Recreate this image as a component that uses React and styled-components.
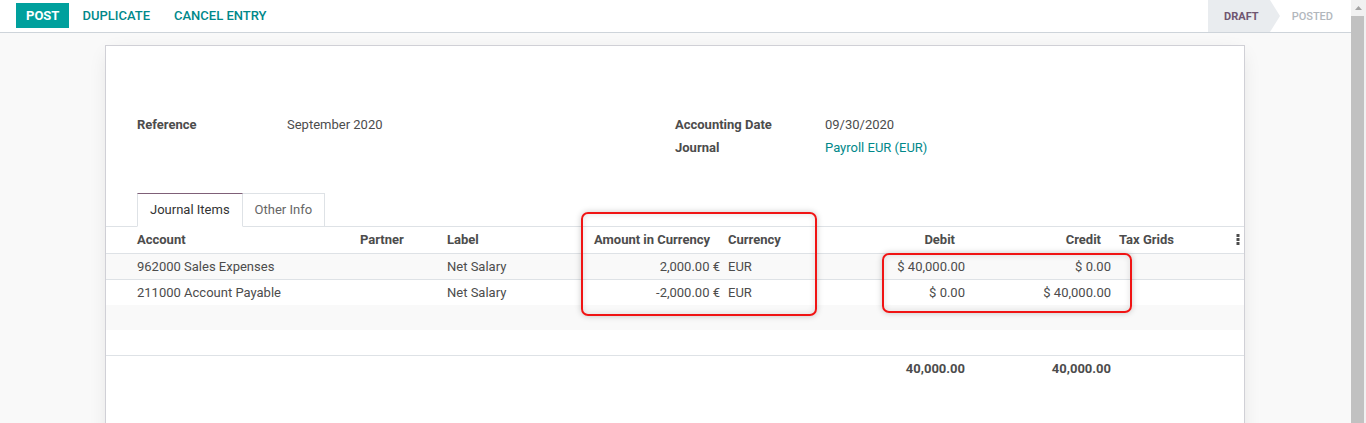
import React from 'react';
import styled, { createGlobalStyle } from 'styled-components';

const GlobalStyle = createGlobalStyle`
    html, body {
        margin: 0;
        padding: 0;
        height: 423px;
        overflow: hidden;
        background: #ffffff;
    }
    body {
        font-family: Roboto, "Noto Sans", "Liberation Sans", sans-serif;
        font-size: 13px;
        color: #4c4c4c;
    }
`;

const Page = styled.div`
    display: flex;
    height: 423px;
    overflow: hidden;
`;

const Main = styled.div`
    flex: 1;
    display: flex;
    flex-direction: column;
    min-width: 0;
`;

const ControlPanel = styled.div`
    display: flex;
    justify-content: space-between;
    height: 32px;
    padding-left: 16px;
    background: #ffffff;
    border-bottom: 1px solid #ced4da;
    flex-shrink: 0;
`;

const Buttons = styled.div`
    display: flex;
    align-items: flex-start;
    gap: 2px;
    padding-top: 3px;
`;

const ActionButton = styled.button`
    height: 25px;
    padding: 0 ${p => (p.$primary ? '10px' : '11px')};
    border: none;
    font-family: inherit;
    font-size: 13px;
    font-weight: ${p => (p.$primary ? 700 : 500)};
    text-transform: uppercase;
    background: ${p => (p.$primary ? '#00a09d' : 'transparent')};
    color: ${p => (p.$primary ? '#ffffff' : '#00888a')};
    cursor: pointer;
`;

const StatusBar = styled.div`
    display: flex;
    align-items: stretch;
    height: 32px;
    padding-right: 18px;
`;

const StatusStep = styled.div`
    position: relative;
    display: flex;
    align-items: center;
    font-size: 11px;
    font-weight: ${p => (p.$active ? 700 : 500)};
    color: ${p => (p.$active ? '#6f5670' : '#b2b7bd')};
    background: ${p => (p.$active ? '#e9ecef' : 'transparent')};
    padding: ${p => (p.$active ? '0 11px 0 16px' : '0 0 0 22px')};

    ${p => p.$active && `
        &::after {
            content: '';
            position: absolute;
            top: 0;
            right: -10px;
            border-top: 16px solid transparent;
            border-bottom: 16px solid transparent;
            border-left: 10px solid #e9ecef;
        }
    `}
`;

const Content = styled.div`
    flex: 1;
    background: #f9f9f9;
    padding: 12px 1px 0 0;
    overflow: hidden;
`;

const Sheet = styled.div`
    position: relative;
    width: 1140px;
    min-height: 420px;
    margin: 0 auto;
    box-sizing: border-box;
    background: #ffffff;
    border: 1px solid #d0d0d6;
    box-shadow: 0 5px 20px -5px rgba(0, 0, 0, 0.12);
`;

const FormBody = styled.div`
    padding: 67px 31px 0;
`;

const Groups = styled.div`
    display: grid;
    grid-template-columns: 1fr 1fr;
`;

const Group = styled.div`
    display: grid;
    grid-template-columns: 150px 1fr;
    grid-auto-rows: 23px;
    align-items: center;
`;

const FieldLabel = styled.div`
    font-weight: 700;
    color: #4c4c4c;
`;

const FieldValue = styled.div`
    color: ${p => (p.$link ? '#00888a' : '#4c4c4c')};
`;

const Tabs = styled.div`
    display: flex;
    margin-top: 34px;
    padding-left: 31px;
    border-bottom: 1px solid #dee2e6;
`;

const Tab = styled.div`
    height: 34px;
    display: flex;
    align-items: center;
    padding: 0 12px 1px;
    box-sizing: border-box;
    margin-bottom: -1px;
    background: #ffffff;
    border: 1px solid #dee2e6;
    border-top-color: ${p => (p.$active ? '#7f6078' : '#dee2e6')};
    border-bottom-color: ${p => (p.$active ? '#ffffff' : '#dee2e6')};
    border-left-width: ${p => (p.$first ? '1px' : '0')};
    color: ${p => (p.$active ? '#333333' : '#666666')};
`;

const COLS = '27px 223px 87px 147px 134px 96px 149px 146px 110px 1fr';

const HeaderRow = styled.div`
    display: grid;
    grid-template-columns: ${COLS};
    height: 27px;
    padding-bottom: 1px;
    box-sizing: border-box;
    border-bottom: 1px solid #dee2e6;
    box-shadow: 0 2px 4px -2px rgba(0, 0, 0, 0.08);
    align-items: center;
    font-weight: 700;
`;

const Row = styled.div`
    display: grid;
    grid-template-columns: ${COLS};
    height: ${p => (p.$bordered ? '26px' : '25px')};
    box-sizing: border-box;
    border-top: ${p => (p.$bordered ? '1px solid #dee2e6' : 'none')};
    background: ${p => (p.$striped ? '#f9f9f9' : '#ffffff')};
    align-items: center;
`;

const FooterRow = styled.div`
    display: grid;
    grid-template-columns: ${COLS};
    height: 26px;
    box-sizing: border-box;
    border-top: 1px solid #dee2e6;
    align-items: center;
    font-weight: 700;
`;

const Cell = styled.div`
    padding: 0 ${p => (p.$head && p.$num ? '14px' : '4px')} 0 4px;
    text-align: ${p => (p.$num ? 'right' : 'left')};
    white-space: nowrap;
    overflow: hidden;
`;

const KebabCell = styled.div`
    display: flex;
    justify-content: flex-end;
    padding-right: 4px;
`;

const Highlight = styled.div`
    position: absolute;
    left: ${p => p.$left}px;
    top: ${p => p.$top}px;
    width: ${p => p.$width}px;
    height: ${p => p.$height}px;
    box-sizing: border-box;
    border: 2px solid #f01414;
    border-radius: 7px;
    box-shadow: 0 0 6px rgba(0, 0, 0, 0.22), inset 0 0 6px rgba(0, 0, 0, 0.12);
    pointer-events: none;
`;

const Scrollbar = styled.div`
    width: 15px;
    flex-shrink: 0;
    background: #f1f1f1;
    display: flex;
    flex-direction: column;
    align-items: center;
`;

const ScrollArrow = styled.div`
    height: 16px;
    display: flex;
    align-items: center;
    justify-content: center;
`;

const ScrollThumb = styled.div`
    flex: 1;
    width: 13px;
    margin-right: 2px;
    background: #c1c1c1;
`;

const Kebab = () => (
    <svg width="4" height="11" viewBox="0 0 4 11">
        <rect x="0.5" y="0" width="3" height="3" fill="#4c4c4c" />
        <rect x="0.5" y="4" width="3" height="3" fill="#4c4c4c" />
        <rect x="0.5" y="8" width="3" height="3" fill="#4c4c4c" />
    </svg>
);

const lines = [
    { account: '962000 Sales Expenses', label: 'Net Salary', amount: '2,000.00 €', currency: 'EUR', debit: '$ 40,000.00', credit: '$ 0.00' },
    { account: '211000 Account Payable', label: 'Net Salary', amount: '-2,000.00 €', currency: 'EUR', debit: '$ 0.00', credit: '$ 40,000.00' },
];

export default function App() {
    return (
        <>
            <GlobalStyle />
            <Page>
                <Main>
                    <ControlPanel>
                        <Buttons>
                            <ActionButton $primary>Post</ActionButton>
                            <ActionButton>Duplicate</ActionButton>
                            <ActionButton>Cancel Entry</ActionButton>
                        </Buttons>
                        <StatusBar>
                            <StatusStep $active>DRAFT</StatusStep>
                            <StatusStep>POSTED</StatusStep>
                        </StatusBar>
                    </ControlPanel>

                    <Content>
                        <Sheet>
                            <FormBody>
                                <Groups>
                                    <Group>
                                        <FieldLabel>Reference</FieldLabel>
                                        <FieldValue>September 2020</FieldValue>
                                    </Group>
                                    <Group>
                                        <FieldLabel>Accounting Date</FieldLabel>
                                        <FieldValue>09/30/2020</FieldValue>
                                        <FieldLabel>Journal</FieldLabel>
                                        <FieldValue $link>Payroll EUR (EUR)</FieldValue>
                                    </Group>
                                </Groups>
                            </FormBody>

                            <Tabs>
                                <Tab $active $first>Journal Items</Tab>
                                <Tab>Other Info</Tab>
                            </Tabs>

                            <HeaderRow>
                                <div />
                                <Cell $head>Account</Cell>
                                <Cell $head>Partner</Cell>
                                <Cell $head>Label</Cell>
                                <Cell $head $num>Amount in Currency</Cell>
                                <Cell $head>Currency</Cell>
                                <Cell $head $num>Debit</Cell>
                                <Cell $head $num>Credit</Cell>
                                <Cell $head>Tax Grids</Cell>
                                <KebabCell><Kebab /></KebabCell>
                            </HeaderRow>

                            {lines.map((l, i) => (
                                <Row key={l.account} $bordered={i > 0} $striped={i % 2 === 0}>
                                    <div />
                                    <Cell>{l.account}</Cell>
                                    <Cell />
                                    <Cell>{l.label}</Cell>
                                    <Cell $num>{l.amount}</Cell>
                                    <Cell>{l.currency}</Cell>
                                    <Cell $num>{l.debit}</Cell>
                                    <Cell $num>{l.credit}</Cell>
                                    <Cell />
                                    <div />
                                </Row>
                            ))}
                            <Row $striped />
                            <Row />

                            <FooterRow>
                                <div />
                                <Cell />
                                <Cell />
                                <Cell />
                                <Cell />
                                <Cell />
                                <Cell $num>40,000.00</Cell>
                                <Cell $num>40,000.00</Cell>
                                <Cell />
                                <div />
                            </FooterRow>

                            <Highlight $left={475} $top={166} $width={236} $height={104} />
                            <Highlight $left={776} $top={207} $width={250} $height={60} />
                        </Sheet>
                    </Content>
                </Main>

                <Scrollbar>
                    <ScrollArrow>
                        <svg width="7" height="4" viewBox="0 0 7 4">
                            <polygon points="0,4 3.5,0 7,4" fill="#a3a3a3" />
                        </svg>
                    </ScrollArrow>
                    <ScrollThumb />
                </Scrollbar>
            </Page>
        </>
    );
}
